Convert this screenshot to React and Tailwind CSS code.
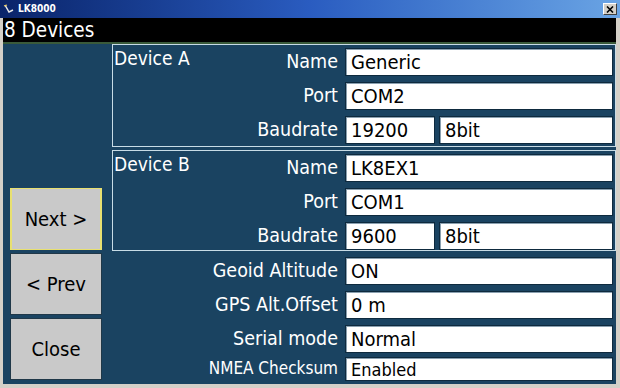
import React from "react";

const font = { fontFamily: '"DejaVu Sans Condensed", "DejaVu Sans", sans-serif' };

function Field({ children, className = "" }) {
  return (
    <div className={"h-full bg-white border border-[#0e2a3e] shadow-[inset_1px_1px_0_#8aa0b0] flex items-center pl-[5px] text-black " + className}>
      {children}
    </div>
  );
}

function Row({ label, children, lead, small }) {
  return (
    <div className={"flex items-stretch " + (small ? "h-[24px]" : "h-[28px]")}>
      {lead && <div className="text-[19px] leading-[20px] pl-[1px] text-white self-start">{lead}</div>}
      <div className={"flex-1 flex items-center justify-end pr-[7px] text-white " + (small ? "text-[17px]" : "text-[19.5px]")}>{label}</div>
      <div className="w-[268px] flex gap-[4px]">{children}</div>
    </div>
  );
}

function DeviceBox({ name, dev, port, baud, mt, pb }) {
  return (
    <div className={"border border-[#c8dce6] pt-[3px] pr-[2px] flex flex-col gap-[6px] " + mt + " " + pb}>
      <Row lead={name} label="Name"><Field className="flex-1 text-[20px]">{dev}</Field></Row>
      <Row label="Port"><Field className="flex-1 text-[20px]">{port}</Field></Row>
      <Row label="Baudrate">
        <Field className="w-[90px] text-[20px]">{baud}</Field>
        <Field className="flex-1 text-[20px]">8bit</Field>
      </Row>
    </div>
  );
}

function Btn({ children, active }) {
  return (
    <div
      className={
        "h-[62px] w-[92px] ml-[7px] bg-[#c9c9c9] flex items-center justify-center text-black text-[20px] border " +
        (active ? "border-[#e8e070] border-x-2" : "border-[#203848]")
      }
    >
      {children}
    </div>
  );
}

export default function App() {
  return (
    <div className="w-[620px] h-[388px] flex flex-col bg-[#d4d0c8] overflow-hidden" style={font}>
      <div className="h-[18px] flex items-center bg-gradient-to-r from-[#0a246a] via-[#2a5cc0] to-[#6aa4e4] px-[3px]">
        <svg width="12" height="12" viewBox="0 0 12 12" className="mr-[3px]">
          <path d="M2 2 L6 9 L10 7" stroke="#e8e8e8" strokeWidth="1.5" fill="none" />
          <path d="M1 3 L4 2" stroke="#f0d060" strokeWidth="1.2" />
        </svg>
        <span className="text-white font-bold text-[10px] leading-none">LK8000</span>
        <div className="ml-auto w-[14px] h-[12px] bg-[#d4d0c8] border border-t-white border-l-white border-r-[#404040] border-b-[#404040] flex items-center justify-center">
          <svg width="8" height="7" viewBox="0 0 8 7">
            <path d="M1 0.5 L7 6.5 M7 0.5 L1 6.5" stroke="#000" strokeWidth="1.6" />
          </svg>
        </div>
      </div>
      <div className="flex-1 flex flex-col ml-[3px] mr-[4px] mb-[4px] bg-[#1a4361]">
        <div className="h-[24px] bg-black text-white text-[20.5px] leading-[24px] pl-[1px]">8 Devices</div>
        <div className="h-[2px] bg-[#3a5a3a]" />
        <div className="flex-1 flex">
          <div className="w-[109px] flex flex-col justify-end gap-[3px] pb-[4px]">
            <Btn active>Next &gt;</Btn>
            <Btn>&lt; Prev</Btn>
            <Btn>Close</Btn>
          </div>
          <div className="flex-1 flex flex-col">
            <DeviceBox name="Device A" dev="Generic" port="COM2" baud="19200" mt="" pb="pb-[2px]" />
            <DeviceBox name="Device B" dev="LK8EX1" port="COM1" baud="9600" mt="mt-[3px]" pb="pb-0" />
            <div className="mt-[6px] flex flex-col gap-[6px] pr-[3px]">
              <Row label="Geoid Altitude"><Field className="flex-1 text-[20px]">ON</Field></Row>
              <Row label="GPS Alt.Offset"><Field className="flex-1 text-[20px]">0 m</Field></Row>
              <Row label="Serial mode"><Field className="flex-1 text-[20px]">Normal</Field></Row>
            </div>
            <div className="mt-[4px] pr-[3px]">
              <Row small label="NMEA Checksum"><Field className="flex-1 text-[18px]">Enabled</Field></Row>
            </div>
          </div>
        </div>
      </div>
    </div>
  );
}
